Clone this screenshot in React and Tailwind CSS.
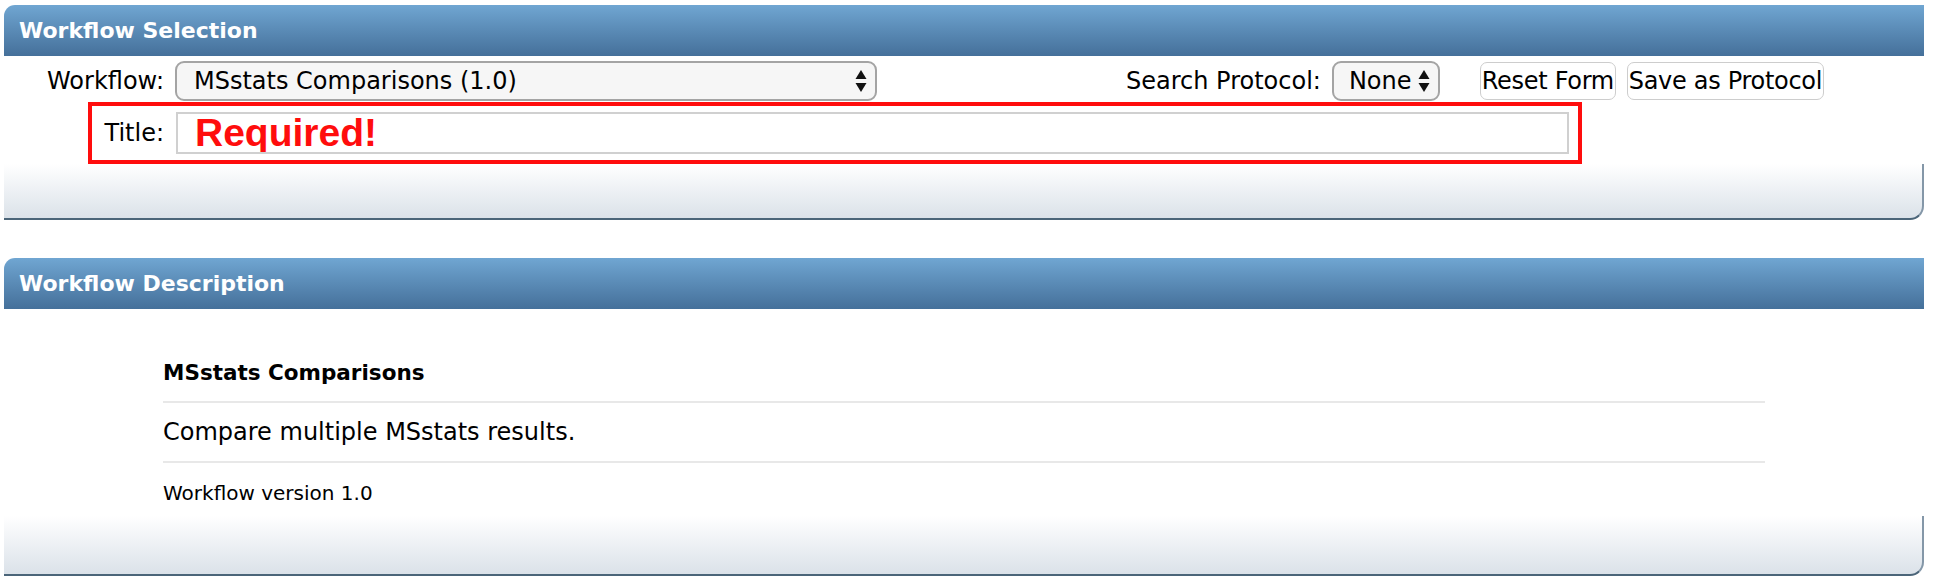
import React from "react";

const Arrows = ({ className }) => (
  <svg className={className} width="12" height="26" viewBox="0 0 12 26" fill="#111">
    <path d="M6 2 L11.5 11 L0.5 11 Z" />
    <path d="M0.5 15 L11.5 15 L6 24 Z" />
  </svg>
);

const FakeSelect = ({ value, className, textClass }) => (
  <div
    className={`relative flex items-center h-[40px] rounded-[9px] border-2 border-[#a4a4a4] bg-[#f6f6f6] ${className}`}
  >
    <span className={textClass}>{value}</span>
    <Arrows className="absolute right-[8px] top-[5px]" />
  </div>
);

const PanelHeader = ({ title }) => (
  <div className="h-[51px] flex items-center pl-[15px] rounded-tl-[11px] bg-gradient-to-b from-[#70a6d2] to-[#45709a]">
    <span className="text-white font-bold text-[22px]">{title}</span>
  </div>
);

const PanelFooter = ({ height }) => (
  <div
    className={`${height} bg-gradient-to-b from-white to-[#dbe2e9] border-b-2 border-r-2 border-b-[#4b6579] border-r-[#8497a8] rounded-br-[14px]`}
  />
);

const WorkflowSelection = () => (
  <div>
    <PanelHeader title="Workflow Selection" />
    <div className="bg-white pt-[5px]">
      <div className="flex items-center h-[40px]">
        <label className="w-[160px] text-right text-[24px]">Workflow:</label>
        <FakeSelect
          value="MSstats Comparisons (1.0)"
          className="ml-[11px] w-[702px]"
          textClass="pl-[17px] text-[24px]"
        />
        <label className="ml-[249px] text-[24px]">Search Protocol:</label>
        <FakeSelect
          value="None"
          className="ml-[11px] w-[108px]"
          textClass="pl-[15px] text-[24px]"
        />
        <button
          type="button"
          className="ml-[40px] h-[38px] w-[136px] flex items-center justify-center rounded-[7px] border border-[#cdcdcd] bg-white text-[24px] tracking-[-0.3px] whitespace-nowrap"
        >
          Reset Form
        </button>
        <button
          type="button"
          className="ml-[11px] h-[38px] w-[197px] flex items-center justify-center rounded-[7px] border border-[#cdcdcd] bg-white text-[24px] tracking-[-0.3px] whitespace-nowrap"
        >
          Save as Protocol
        </button>
      </div>
      <div className="mt-[1px] ml-[84px] w-[1494px] border-4 border-[#ff0d0d] flex items-center pt-[6px] pb-[6px]">
        <label className="w-[72px] text-right text-[24px]">Title:</label>
        <input
          readOnly
          value="Required!"
          className="ml-[12px] w-[1393px] h-[42px] border-2 border-[#d0d0d0] bg-white pl-[17px] text-[39px] font-bold text-[#ff0d0d] font-['Liberation_Sans',Arial,sans-serif] outline-none"
        />
      </div>
    </div>
    <PanelFooter height="h-[56px]" />
  </div>
);

const WorkflowDescription = () => (
  <div>
    <PanelHeader title="Workflow Description" />
    <div className="bg-white pt-[44px]">
      <div className="mx-[159px]">
        <div className="h-[40px] flex items-center font-bold text-[21.5px]">MSstats Comparisons</div>
        <div className="mt-[8px] h-[2px] bg-[#e8e8e8]" />
        <div className="h-[58px] flex items-center text-[24px]">Compare multiple MSstats results.</div>
        <div className="h-[2px] bg-[#e8e8e8]" />
        <div className="h-[53px] pt-[18px] text-[20px] leading-[24px]">Workflow version 1.0</div>
      </div>
    </div>
    <PanelFooter height="h-[60px]" />
  </div>
);

export default function App() {
  return (
    <div className="min-h-screen bg-white text-black font-['DejaVu_Sans',Verdana,sans-serif] pt-[5px] pl-[4px] pr-[10px]">
      <WorkflowSelection />
      <div className="h-[38px]" />
      <WorkflowDescription />
    </div>
  );
}
